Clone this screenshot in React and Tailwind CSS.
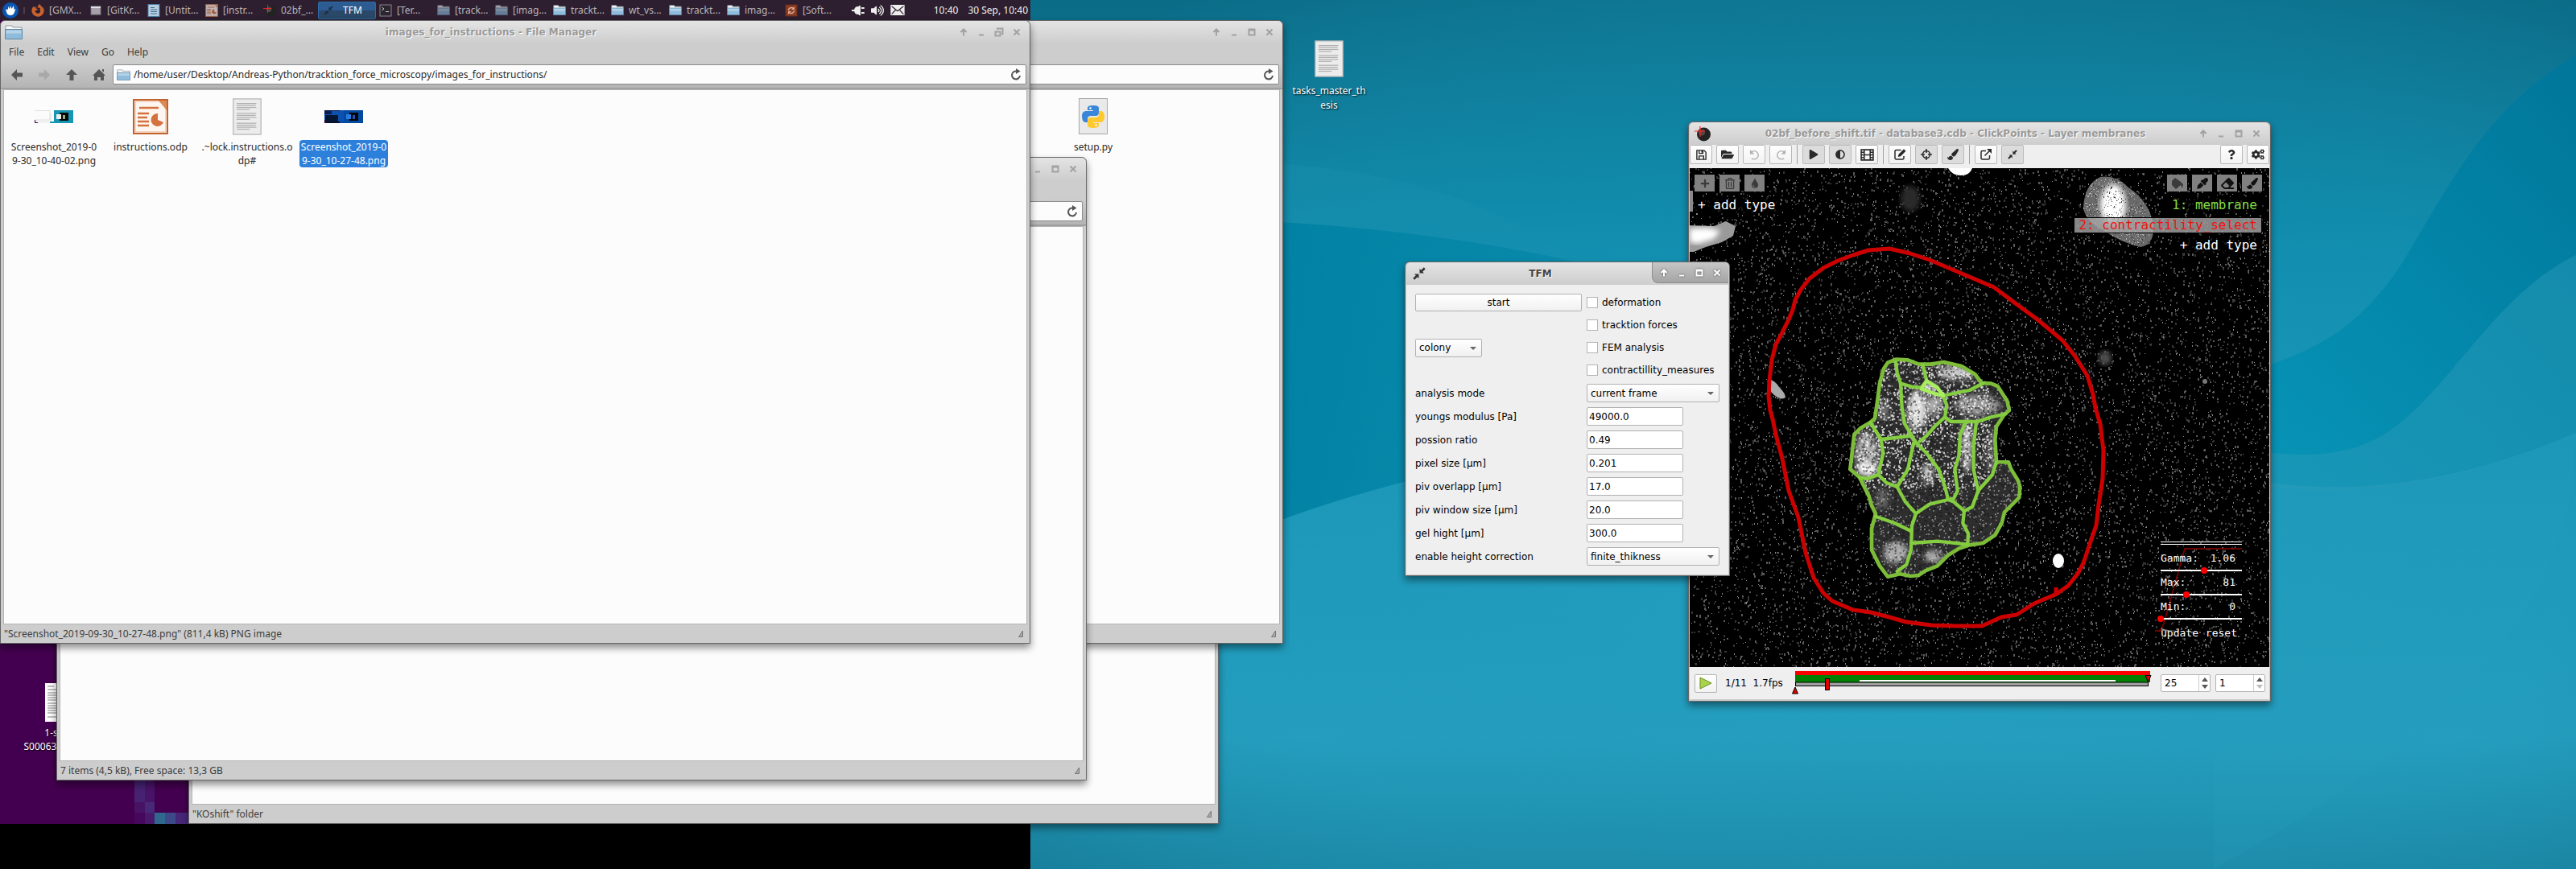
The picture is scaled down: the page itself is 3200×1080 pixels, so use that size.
import React from "react";
import {
  FaFolderOpen, FaPlay, FaAdjust, FaPaintBrush, FaQuestion, FaCogs, FaPlus, FaTint, FaEraser,
  FaEyeDropper, FaRegTrashAlt, FaFirefoxBrowser, FaVolumeUp, FaPlug,
} from "react-icons/fa";

/* ---------- small drawings ---------- */

function Folder({ className, dim }) {
  return (
    <svg viewBox="0 0 22 18" className={className} opacity={dim ? 0.6 : 1} aria-hidden="true">
      <path d="M1 1h8l1 2h11v5H1z" fill="#fafafa" stroke="#8f9aa3" strokeWidth="1" />
      <path d="M.5 5.500h21v12H.5z" fill="#8fbcdc" stroke="#5e88a5" />
      <path d="M1.500 6.500h19v4h-19z" fill="#b4d3e8" />
    </svg>
  );
}

function TextDoc({ className }) {
  const lines = [8, 11, 14, 17, 23, 26, 29, 32, 38, 41, 44, 47];
  return (
    <svg viewBox="0 0 44 56" className={className} aria-hidden="true">
      <rect x="1" y="1" width="42" height="54" fill="#ececec" stroke="#b5b5b5" strokeWidth="1.5" />
      {lines.map((y, i) => (
        <path key={y} d={`M6 ${y}H${i % 4 === 3 ? 26 : 36 - (i % 2)}`} stroke="#b0b0b0" strokeWidth="1.5" />
      ))}
    </svg>
  );
}

function OdpIcon({ className, dim }) {
  return (
    <svg viewBox="0 0 44 44" className={className} opacity={dim ? 0.7 : 1} aria-hidden="true">
      <rect x="1" y="1" width="42" height="42" fill="#fff" stroke="#c4622d" strokeWidth="2" />
      <rect x="3" y="3" width="38" height="38" fill="#fdf6f0" stroke="#e9b28e" />
      <path d="M32 2h10v12z" fill="#dd8a55" />
      <path d="M8 11h24M6 18h14M6 23h12M6 28h14M6 33h14" stroke="#d4713f" strokeWidth="2.500" />
      <path d="M31 26V18a8 8 0 1 0 7 11z" fill="#d4713f" />
    </svg>
  );
}

function PythonIcon({ className }) {
  return (
    <svg viewBox="0 0 36 46" className={className} aria-hidden="true">
      <rect x=".5" y=".5" width="35" height="44" fill="#e9e9e9" stroke="#a8a8a8" />
      <path d="M11 15v-3q0-3 7-3t7 3v6q0 4-4 4h-6q-4 0-4 4v4H8q-4-1-4-7.500T9 16h9v-1z" fill="#3a86d8" />
      <path d="M25 31v3q0 3-7 3t-7-3v-6q0-4 4-4h6q4 0 4-4v-4h3q4 1 4 7.500T27 30h-9v1z" fill="#fdc92f" />
      <circle cx="14.500" cy="12.500" r="1.300" fill="#fff" />
      <circle cx="21.500" cy="33.500" r="1.300" fill="#fff" />
    </svg>
  );
}

function Thumb({ selected }) {
  const a = selected ? "#0d51b0" : "#fbfbfb";
  return (
    <svg viewBox="0 0 48 16" className="h-4 w-12" aria-hidden="true">
      <rect width="48" height="16" fill={selected ? "#0349a0" : "#1796b4"} />
      <rect width="24" height="14" fill={a} />
      {!selected && <path d="M19 0v12M0 12h19M20 3v11M2 14h18" stroke="#c4c4c4" strokeWidth=".5" />}
      <rect y="14" width="19" height="2" fill={selected ? "#06112e" : "#f2f2f2"} />
      <rect width="19" height="1" fill={selected ? "#0b1a4a" : "#e2e2e6"} />
      <path d="M0 12h1v3h3v1H0z" fill="#3b0345" />
      {selected && <path d="M0 0h9v5h-9z" fill="#0a1c50" />}
      {selected && <rect x="1" y="6" width="16" height="9" fill="#061632" />}
      <rect x="31" y="3" width="11" height="10" fill="#050505" />
      <rect x="27" y="5" width="6" height="6" fill={selected ? "#2a7be0" : "#eee"} />
      <rect x="35" y="6" width="3" height="5" fill={selected ? "#1d56b8" : "#8fae80"} />
    </svg>
  );
}

function Compress({ className }) {
  return (
    <svg viewBox="0 0 16 16" className={className} fill="currentColor" aria-hidden="true">
      <path d="M8.500 7.500V2l1.800 1.800L13.800.3 15.700 2.200l-3.500 3.500L14 7.500zM7.500 8.500V14l-1.800-1.800-3.500 3.500L.3 13.800l3.500-3.500L2 8.500z" />
    </svg>
  );
}

function BallIcon({ className }) {
  return (
    <svg viewBox="0 0 20 20" className={className} aria-hidden="true">
      <circle cx="11.500" cy="11" r="8.500" fill="#222" />
      <circle cx="9" cy="8.500" r="4" fill="#4a4a4a" />
      <path d="M7 1v13M0 7h13" stroke="#f22" strokeWidth="1.200" />
    </svg>
  );
}

function Stroke({ className, d, fill }) {
  return (
    <svg viewBox="0 0 16 16" className={className} fill="none" stroke="currentColor" strokeWidth="1.500" aria-hidden="true">
      <path d={d} />
      {fill && <path d={fill} fill="currentColor" stroke="none" />}
    </svg>
  );
}
const SaveIcon = () => <Stroke className="size-[15px]" d="M2 2h9.500L14 4.500V14H2zM5 14V9.500h6V14M5 2v4h5V2" fill="M8 2h2v3H8z" />;
const UndoIcon = () => <Stroke className="size-[15px]" d="M3.500 4.500A5.500 5.500 0 1 1 4 12.500" fill="M2 1v6h6z" />;
const RedoIcon = () => <Stroke className="size-[15px]" d="M12.500 4.500A5.500 5.500 0 1 0 12 12.500" fill="M14 1v6H8z" />;
const FilmIcon = () => <Stroke className="size-[17px]" d="M1 2h14v12H1zM4.500 2v12M11.500 2v12M4.500 8h7M1 5h3.500M1 8h3.500M1 11h3.500M11.500 5H15M11.500 8H15M11.500 11H15" />;
const EditIcon = () => <Stroke className="size-[16px]" d="M9.500 2.500H3.500a1.500 1.500 0 0 0-1.500 1.500v8.500A1.500 1.500 0 0 0 3.500 14h8a1.500 1.500 0 0 0 1.500-1.500V10" fill="M13 1.200l2.500 2.500-6.500 6.500-3.200.8.700-3.300z" />;
const AimIcon = () => <Stroke className="size-[16px]" d="M8 1v5M8 10v5M1 8h5M10 8h5M8 3.500A4.500 4.500 0 1 1 8 12.500A4.500 4.500 0 1 1 8 3.500" />;
const LinkIcon = () => <Stroke className="size-[16px]" d="M8 3.500H3.500A1.500 1.500 0 0 0 2 5v7.500A1.500 1.500 0 0 0 3.500 14h7.500a1.500 1.500 0 0 0 1.500-1.500V9M6.500 9.500L13 3" fill="M9 1h6v6z" />;

function BucketIcon() {
  return (
    <svg viewBox="0 0 16 16" className="size-4" fill="currentColor" aria-hidden="true">
      <path d="M5 1l7 5 3 3-1 5-2-4-6 5-5-5V5z" />
    </svg>
  );
}

/* ---------- window chrome ---------- */

function WinButtons({ active, maximized }) {
  const color = active ? "text-white" : "text-[#a2a2a2]";
  const items = [
    ["Shade", "M6 10.500V5M2.500 6L6 2.500L9.500 6", "M6 1.500l4 4H2z"],
    ["Minimize", "M3 9.500h6", null],
    [
      maximized ? "Restore" : "Maximize",
      maximized ? "M1.500 5.500h6v5h-6zM4 3V1.500h6.500V8H9" : "M2.500 2.500h7v7h-7zM2 3.500h8",
      null,
    ],
    ["Close", "M2.500 2.500l7 7M9.500 2.500l-7 7", null],
  ];
  return (
    <div
      className={
        active
          ? "flex h-[26px] items-center gap-[10px] self-start rounded-bl-lg rounded-tr-md border-b border-l border-[#8e8e8e] bg-linear-to-b from-[#c6c6c6] to-[#a4a4a4] pr-2 pl-2"
          : "flex items-center gap-[10px] pr-[10px]"
      }
    >
      {items.map(([name, d, f]) => (
        <button key={name} aria-label={name} className={`block size-3 ${color}`}>
          <svg viewBox="0 0 12 12" className={active ? "size-3 drop-shadow-[0_0_1px_#444]" : "size-3"} fill="none" stroke="currentColor" strokeWidth="2">
            <path d={d} />
            {f && <path d={f} fill="currentColor" stroke="none" />}
          </svg>
        </button>
      ))}
    </div>
  );
}

function TitleBar({ icon, title, active, maximized }) {
  return (
    <header className="flex h-7 shrink-0 items-center rounded-t-md bg-linear-to-b from-[#e4e4e4] to-[#cdcdcd] pl-1">
      <span className="flex w-6 justify-center">{icon}</span>
      <h2
        className={`flex-1 truncate text-center font-['DejaVu_Sans',sans-serif] text-[12px] font-bold [text-shadow:1px_1px_0_#fff] ${active ? "text-[#444]" : "text-[#999]"}`}
      >
        {title}
      </h2>
      <WinButtons active={active} maximized={maximized} />
    </header>
  );
}

const winBase =
  "absolute flex flex-col rounded-t-md border border-[#666] bg-[#cdcdcd] shadow-[0_5px_10px_rgba(0,0,0,0.45)]";

function ArrowGlyph({ d, label, disabled }) {
  return (
    <button aria-label={label} disabled={disabled} className={`flex size-[34px] items-center justify-center ${disabled ? "text-[#a8a8a8]" : "text-[#555]"}`}>
      <svg viewBox="0 0 16 16" className="size-4" fill="currentColor" aria-hidden="true">
        <path d={d} />
      </svg>
    </button>
  );
}

function FileWindow({ place, title, path, status, maximized, children }) {
  return (
    <section className={`${winBase} ${place} h-[775px] w-[1280px] font-['Noto_Sans',sans-serif] text-[12px] text-[#3c3c3c]`}>
      <TitleBar icon={<Folder className="h-[18px] w-[22px]" />} title={title} maximized={maximized} />
      <nav className="flex h-[22px] shrink-0 items-center gap-4 pl-[10px]">
        {["File", "Edit", "View", "Go", "Help"].map((m) => (
          <button key={m}>{m}</button>
        ))}
      </nav>
      <div className="flex h-[35px] shrink-0 items-center border-b-2 border-[#a0a0a0] bg-linear-to-b from-[#cdcdcd] to-[#b4b4b4] pr-1 pl-[3px]">
        <ArrowGlyph label="Back" d="M1 8l7-7v4.500h7v5H8V15z" />
        <ArrowGlyph label="Forward" disabled d="M15 8L8 1v4.500H1v5h7V15z" />
        <ArrowGlyph label="Up" d="M8 1l7 7h-4.500v7h-5V8H1z" />
        <ArrowGlyph label="Home" d="M8 1l8 8h-2v6H10v-4H6v4H2V9H0zM12 1h2v4l-2-2z" />
        <label className="flex h-[25px] flex-1 items-center gap-1 rounded-xs border border-[#8a8a8a] bg-[#fcfcfc] px-1">
          <Folder className="h-[14px] w-[17px]" />
          <input aria-label="Location" defaultValue={path} className="min-w-0 flex-1 bg-transparent text-[#2a2a2a] outline-none" />
          <button aria-label="Reload" className="text-[#555]">
            <svg viewBox="0 0 16 16" className="size-4" fill="none" stroke="currentColor" strokeWidth="2" aria-hidden="true">
              <path d="M9 3.500A5 5 0 1 0 13 9" />
              <path d="M8 0l5.500 3.500L8 7z" fill="currentColor" stroke="none" />
            </svg>
          </button>
        </label>
      </div>
      <div className="mx-[3px] flex min-h-0 flex-1 border border-[#b4b4b4] bg-[#fcfcfc] pt-2 pl-0.5">{children}</div>
      <footer className="flex h-[23px] shrink-0 items-center justify-between pr-2 pl-1">
        <span>{status}</span>
        <svg viewBox="0 0 6 8" className="h-2 w-1.5" aria-hidden="true">
          <path d="M5.500 0v7.500H.5z" fill="#aaa" stroke="#777" />
        </svg>
      </footer>
    </section>
  );
}

function FileItem({ icon, lines, selected }) {
  return (
    <div className="flex w-[120px] flex-col items-center">
      <div className="flex h-[50px] items-center justify-center">{icon}</div>
      <p className={`mt-1 rounded-sm px-0.5 text-center leading-[17px] ${selected ? "bg-[#2c80dc] text-white" : "text-[#2a2a2a]"}`}>
        {lines.map((l) => (
          <span key={l} className="block">{l}</span>
        ))}
      </p>
    </div>
  );
}

/* ---------- task bar ---------- */

const tinyWindow = (
  <svg viewBox="0 0 16 14" className="h-3 w-4" aria-hidden="true"><rect x="1" y="1" width="14" height="12" fill="#a5a0aa" stroke="#77727c" /><path d="M1 2.500h14" stroke="#e4e4e8" strokeWidth="2" /></svg>
);
const tinyDoc = (
  <svg viewBox="0 0 16 16" className="size-4" aria-hidden="true"><rect x="1" y=".5" width="14" height="15" fill="#b9cedd" stroke="#4a7da3" /><path d="M4 4.500h5M4 7h8M4 9.500h8M4 12h8" stroke="#3f6d92" strokeWidth="1.200" /></svg>
);
const tinyTerm = (
  <svg viewBox="0 0 16 16" className="size-4" aria-hidden="true"><rect x="1" y="1" width="14" height="14" fill="#2b2630" stroke="#8a858f" /><path d="M3.500 4l2.500 2-2.500 2M8 9.500h4" stroke="#ccc" fill="none" /></svg>
);
const tinySoft = (
  <svg viewBox="0 0 16 16" className="size-4" aria-hidden="true"><rect x="1" y="1" width="14" height="14" fill="#8b3c24" stroke="#6b2c18" /><path d="M4.500 8a3.500 3.500 0 0 1 6-2.500M11.500 8a3.500 3.500 0 0 1-6 2.500" stroke="#d9a892" strokeWidth="1.500" fill="none" /><path d="M12 3v4H8zM4 13V9h4z" fill="#d9a892" /></svg>
);
const tasks = [
  [<FaFirefoxBrowser className="size-4 text-[#c9622c]" />, "[GMX..."],
  [tinyWindow, "[GitKr..."],
  [tinyDoc, "[Untit..."],
  [<OdpIcon className="size-4" dim />, "[instr..."],
  [<BallIcon className="size-4" />, "02bf_..."],
  [<Compress className="size-3 text-[#1d3049]" />, "TFM"],
  [tinyTerm, "[Ter..."],
  [<Folder className="h-[13px] w-4" dim />, "[track..."],
  [<Folder className="h-[13px] w-4" dim />, "[imag..."],
  [<Folder className="h-[13px] w-4" />, "trackt..."],
  [<Folder className="h-[13px] w-4" />, "wt_vs..."],
  [<Folder className="h-[13px] w-4" />, "trackt..."],
  [<Folder className="h-[13px] w-4" />, "imag..."],
  [tinySoft, "[Soft..."],
];

function TaskBar() {
  return (
    <nav className="flex h-[25px] items-center bg-[#2d1f2f] pl-[3px] font-['Noto_Sans',sans-serif] text-[12px] text-[#b9b4b9]">
      <button aria-label="Applications" className="mr-1.5">
        <svg viewBox="0 0 20 20" className="size-5" aria-hidden="true">
          <circle cx="10" cy="10" r="10" fill="#0b56b3" />
          <path d="M4 8q2 2 3 0l0-3 2 3 1-4 1.500 4L14 4l.5 5 2-1-1.500 4q-1 4-5 4t-5-4z" fill="#fff" />
        </svg>
      </button>
      <span className="mr-1 h-2 w-0.5 bg-[#4b3f4d]" />
      {tasks.map(([icon, label], i) => (
        <button
          key={i}
          className={`flex h-[22px] w-[72px] items-center overflow-hidden whitespace-nowrap ${label === "TFM" ? "gap-[10px] rounded-xs border border-[#2f6ba6] bg-linear-to-b from-[#2c5c91] from-50% to-[#2a4867] to-50% pl-1 text-white" : "gap-[6px] pl-1"}`}
        >
          <span className="flex w-4 shrink-0 justify-center">{icon}</span>
          {label}
        </button>
      ))}
      <div className="ml-auto flex items-center gap-2 pr-[3px] text-[#eee]">
        <FaPlug className="size-4 rotate-90" />
        <FaVolumeUp className="size-4" />
        <svg viewBox="0 0 20 15" className="h-[13px] w-[18px]" aria-hidden="true">
          <rect width="20" height="15" fill="#eee" />
          <path d="M1.500 2l8.500 7 8.500-7M1.500 13.500L7 7.500M18.500 13.500L13 7.500" stroke="#2d1f2f" strokeWidth="1.300" fill="none" />
        </svg>
        <span className="ml-7">10:40</span>
        <span className="ml-1">30 Sep, 10:40</span>
      </div>
    </nav>
  );
}

/* ---------- wallpaper ---------- */

function Wallpaper() {
  return (
    <svg viewBox="0 0 1568 1568" preserveAspectRatio="none" className="absolute inset-0 size-full" aria-hidden="true">
      <defs>
        <linearGradient id="wp" x1="0" y1="0" x2="0" y2="1">
          <stop offset="0" stopColor="#0c7794" />
          <stop offset=".3" stopColor="#108fb0" />
          <stop offset=".6" stopColor="#1d9abb" />
          <stop offset=".85" stopColor="#259fc0" />
          <stop offset="1" stopColor="#1d8caa" />
        </linearGradient>
        <radialGradient id="wc" cx=".55" cy=".6" r=".75">
          <stop offset="0" stopColor="#27a6c8" stopOpacity=".45" />
          <stop offset=".6" stopColor="#1e8eac" stopOpacity=".1" />
          <stop offset="1" stopColor="#0a5f78" stopOpacity=".45" />
        </radialGradient>
        <linearGradient id="wd" x1="0" y1="0" x2="1" y2="0">
          <stop offset="0" stopColor="#0080a2" />
          <stop offset="1" stopColor="#0089ab" stopOpacity=".1" />
        </linearGradient>
        <linearGradient id="wr" x1="0" y1="1" x2="1" y2="0">
          <stop offset="0" stopColor="#0095b8" stopOpacity=".7" />
          <stop offset="1" stopColor="#00769a" />
        </linearGradient>
      </defs>
      <rect width="1568" height="1568" fill="url(#wp)" />
      <rect width="1568" height="1568" fill="url(#wc)" />
      <path d="M200 290Q430 300 552 472T700 700H200z" fill="#1b8fae" opacity=".35" />
      <path d="M200 396Q400 410 560 475T900 700L700 760Q420 830 256 937L200 970z" fill="url(#wd)" />
      <path d="M1568 100C1480 190 1440 330 1400 450C1350 600 1300 640 1200 690V850C1300 900 1430 890 1568 780z" fill="url(#wr)" />
      <path d="M1200 800C1330 850 1370 800 1410 730C1460 640 1500 520 1568 460V780C1450 880 1320 910 1200 860z" fill="#2c9cb8" opacity=".45" />
      <path d="M1200 850C1320 915 1450 880 1568 780C1568 1050 1480 1300 1200 1568z" fill="#27a0be" opacity=".2" />
    </svg>
  );
}

/* ---------- TFM dialog ---------- */

function Combo({ label, id, options, className }) {
  return (
    <span className={`relative block ${className}`}>
      <select id={id} aria-label={label} className="block h-[23px] w-full appearance-none rounded-xs border border-[#b1b1b1] bg-linear-to-b from-white to-[#f0f0f0] pl-1 text-black">
        {options.map((o) => (
          <option key={o}>{o}</option>
        ))}
      </select>
      <svg viewBox="0 0 8 4" className="pointer-events-none absolute top-[10px] right-[7px] h-1 w-2" aria-hidden="true">
        <path d="M0 0h8L4 4z" fill="#666" />
      </svg>
    </span>
  );
}

function Check({ label }) {
  return (
    <label className="flex h-[22px] items-center gap-[5px] whitespace-nowrap">
      <input type="checkbox" className="size-[14px] appearance-none border border-[#b4b4b4] bg-white" />
      {label}
    </label>
  );
}

const fields = [
  ["youngs modulus [Pa]", "49000.0"],
  ["possion ratio", "0.49"],
  ["pixel size [µm]", "0.201"],
  ["piv overlapp [µm]", "17.0"],
  ["piv window size [µm]", "20.0"],
  ["gel hight [µm]", "300.0"],
];

function TfmWindow() {
  return (
    <section className={`${winBase} top-[325px] left-[1745px] w-[404px] px-px pb-px font-['DejaVu_Sans',sans-serif] text-[12px] text-black`}>
      <TitleBar active title="TFM" icon={<Compress className="size-4 text-[#333]" />} />
      <form className="grid grid-cols-[207px_1fr] items-center gap-x-1.5 gap-y-1.5 bg-[#efefef] p-[11px]">
        <button type="button" className="h-[22px] rounded-xs border border-[#b1b1b1] bg-linear-to-b from-white to-[#f0f0f0]">start</button>
        <Check label="deformation" />
        <span />
        <Check label="tracktion forces" />
        <div className="flex h-[22px] items-center">
          <Combo label="cell type" id="celltype" options={["colony", "cell layer"]} className="w-[83px]" />
        </div>
        <Check label="FEM analysis" />
        <span />
        <Check label="contractillity_measures" />
        <label htmlFor="mode">analysis mode</label>
        <Combo id="mode" options={["current frame", "all frames"]} className="w-full" />
        {fields.map(([label, value], i) => (
          <React.Fragment key={label}>
            <label htmlFor={`f${i}`}>{label}</label>
            <input id={`f${i}`} defaultValue={value} className="h-[23px] w-[120px] rounded-xs border border-[#b1b1b1] bg-white px-0.5" />
          </React.Fragment>
        ))}
        <label htmlFor="height">enable height correction</label>
        <Combo id="height" options={["finite_thikness", "infinite_thikness"]} className="w-full" />
      </form>
    </section>
  );
}

/* ---------- microscope image ---------- */

function specks(seed, count, w, h, size) {
  let s = seed;
  const rnd = () => {
    s = (s * 1664525 + 1013904223) % 4294967296;
    return s / 4294967296;
  };
  let d = "";
  for (let i = 0; i < count; i++) {
    const x = Math.round(rnd() * w);
    const y = Math.round(rnd() * h);
    const k = rnd() > 0.6 ? size + 1 : size;
    d += `M${x} ${y}h${size}v${k}h-${size}z`;
  }
  return d;
}

const colonyOutline =
  "M285 80L255 92L240 115L225 170L218 225L207 300L190 315L155 335L130 360L122 430L115 490L150 520L165 550L185 590L195 625L210 655L195 710L195 790L225 850L255 890L300 880L340 888L370 885L395 868L440 850L480 810L520 785L560 772L610 765L655 735L680 690L690 650L745 595L748 555L740 530L715 490L705 463L660 462L655 380L660 330L690 285L708 270L700 235L665 180L640 170L605 168L580 135L530 105L465 90L415 98L370 98L330 82Z";
const membranes = [
  "M285 90L290 130L303 170L308 260L318 320L345 365L360 390",
  "M303 170L350 183L380 185L400 160L385 100",
  "M400 160L440 185L460 215L475 250L468 295L430 330L400 365L375 385",
  "M380 190L430 208L462 215L560 195L612 168",
  "M468 295L490 312L590 312L640 295L695 283",
  "M230 378L345 365M190 315L230 378L238 430L220 510L180 525L150 520",
  "M220 510L250 540L290 555L330 490L352 390",
  "M290 555L320 610L360 655L345 700L342 790L325 845L290 870",
  "M360 655L410 620L480 603L470 560L445 490L400 430L360 390",
  "M545 315L525 360L520 440L505 490L515 570L500 600L480 603L500 610L540 645L535 690L555 730L553 770",
  "M585 315L575 400L575 490L592 570L570 630L540 645",
  "M660 462L645 510L592 570M210 665L280 690L342 720",
  "M342 765L440 758L553 770",
];
const glows = [
  [178, 430, 42, 80, 0.6], [510, 130, 70, 25, 0.75], [365, 270, 35, 75, 0.85], [430, 250, 30, 40, 0.6],
  [590, 250, 85, 40, 0.5], [550, 400, 20, 100, 0.65], [405, 505, 22, 35, 0.75], [240, 270, 20, 40, 0.35],
  [285, 800, 45, 40, 0.6], [425, 815, 35, 22, 0.6], [640, 420, 16, 80, 0.35], [235, 600, 25, 40, 0.25],
  [180, 490, 38, 22, 1], [415, 185, 22, 14, 1],
];

function CellImage() {
  return (
    <svg viewBox="0 0 720 620" preserveAspectRatio="xMidYMid slice" className="absolute inset-0 size-full bg-black" aria-hidden="true">
      <defs>
        <filter id="soft"><feGaussianBlur stdDeviation="3" /></filter>
        <filter id="softer" x="-50%" y="-50%" width="200%" height="200%"><feGaussianBlur stdDeviation="11" /></filter>
        <clipPath id="colony"><path d={colonyOutline} /></clipPath>
        <clipPath id="blob"><path d="M489 50Q490 20 510 11Q530 8 545 24Q570 40 576 70Q578 95 560 98Q535 92 515 78Q492 66 489 50" /></clipPath>
      </defs>
      <path d={specks(7, 3600, 720, 620, 1)} fill="#8a8a8a" />
      <path d={specks(91, 3200, 720, 620, 2)} fill="#5a5a5a" />
      <path d={specks(33, 4200, 720, 620, 2)} fill="#363636" />
      <g clipPath="url(#blob)">
        <rect x="480" width="110" height="110" fill="#6a6a6a" />
        <ellipse cx="526" cy="46" rx="16" ry="26" fill="#fff" filter="url(#soft)" />
        <path transform="translate(480 0)" d={specks(5, 900, 110, 110, 1)} fill="#b5b5b5" />
        <path transform="translate(480 0)" d={specks(6, 500, 110, 110, 1)} fill="#3f3f3f" />
      </g>
      <path d="M0 71L30 72L45 66L57 72L54 84L40 92L20 98L5 104H0z" fill="#9a9a9a" />
      <path d="M0 75L22 74L38 78L30 88L10 94L0 92z" fill="#fff" filter="url(#soft)" />
      <path d="M0 28h4v26H0z" fill="#888" />
      <path d="M321 0h30q-3 9-14 9T321 0z" fill="#fff" />
      <ellipse cx="274" cy="38" rx="12" ry="16" fill="#2c2c2c" filter="url(#soft)" />
      <path d="M99 262q8 3 12 10q8 8 8 13q-5 4-14-3q-8-6-6-20z" fill="#aaa" />
      <ellipse cx="516" cy="236" rx="8" ry="9" fill="#4e4e4e" filter="url(#soft)" />
      <circle cx="640" cy="265" r="3" fill="#777" />
      <ellipse cx="458" cy="488" rx="7" ry="9" fill="#fff" />
      <svg x="161" y="211" width="300" height="320" viewBox="0 0 900 960">
        <g clipPath="url(#colony)">
          <rect width="900" height="960" fill="#2e2e2e" />
          {glows.map(([cx, cy, rx, ry, o]) => (
            <ellipse key={`${cx}-${cy}`} cx={cx} cy={cy} rx={rx} ry={ry} fill="#fff" opacity={o} filter="url(#softer)" />
          ))}
          <path d={specks(11, 5200, 900, 960, 6)} fill="#161616" opacity=".55" />
          <path d={specks(12, 3600, 900, 960, 5)} fill="#d8d8d8" opacity=".55" />
          <path d={specks(13, 1600, 640, 560, 6)} fill="#fff" opacity=".75" />
        </g>
        <g fill="none" stroke="#84cc40" strokeWidth="13" strokeLinejoin="round" strokeLinecap="round">
          <path d={colonyOutline} strokeWidth="14" stroke="#7cbc38" />
          {membranes.map((d) => (
            <path key={d} d={d} />
          ))}
          <path d="M400 160L380 190L430 208L462 215L440 185z" stroke="#a8ec60" />
        </g>
      </svg>
      <path
        d="M248 100L222 102L203 108L184 115L166 124L149 137L138 151L131 164L128 176L123 188L113 208L107 219L102 238L99 264L98 284L100 301L103 312L107 331L115 361L123 401L135 434L144 478L154 509L166 528L177 538L203 549L225 552L248 558L269 564L300 568L331 569L363 569L387 558L406 555L428 541L456 529L470 519L482 504L489 491L498 464L505 444L508 418L513 386L514 351L510 318L504 298L501 281L494 258L479 234L463 214L432 188L406 169L378 148L331 128L298 114L274 106ZM455 521V530"
        fill="none" stroke="#cc0000" strokeWidth="5" strokeLinejoin="round"
      />
    </svg>
  );
}

/* ---------- ClickPoints window ---------- */

function Tool({ label, pressed, disabled, children }) {
  return (
    <button
      aria-label={label}
      disabled={disabled}
      className={`flex h-6 w-7 items-center justify-center rounded-xs border ${pressed ? "border-[#bbb] bg-[#dcdcdc]" : "border-[#b8b8b8] bg-linear-to-b from-white to-[#f2f2f2]"} ${disabled ? "text-[#b0b0b0]" : "text-[#2a2a2a]"}`}
    >
      {children}
    </button>
  );
}
const Sep = () => <span className="mx-px h-6 w-px bg-[#a0a0a0]" />;

function Chip({ label, dim, children }) {
  return (
    <button aria-label={label} className={`flex h-[21px] w-[25px] items-center justify-center bg-[#808080] ${dim ? "text-[#3a3a3a]" : "text-[#111]"}`}>
      {children}
    </button>
  );
}

function Level({ label, value, pos }) {
  return (
    <label className="block h-[30px]">
      <span className="flex h-[22px] items-center justify-between pr-2">
        <span>{label}</span>
        <span>{value}</span>
      </span>
      <span className="relative block h-2">
        <span className="absolute inset-x-0 top-[3px] h-0.5 bg-white" />
        <input
          type="range" min="0" max="100" defaultValue={pos}
          className="relative -left-1 block h-2 w-[109px] appearance-none bg-transparent [&::-webkit-slider-thumb]:h-2 [&::-webkit-slider-thumb]:w-2 [&::-webkit-slider-thumb]:appearance-none [&::-webkit-slider-thumb]:rounded-full [&::-webkit-slider-thumb]:bg-[#f00]"
        />
      </span>
    </label>
  );
}

function Spin({ label, value }) {
  return (
    <div className="flex h-[22px] w-[62px] rounded-xs border border-[#b4b4b4] bg-white">
      <input aria-label={label} defaultValue={value} className="w-[46px] min-w-0 bg-transparent pl-1" />
      <div className="flex flex-1 flex-col items-center justify-center gap-1 border-l border-[#ccc]">
        <button aria-label={`Increase ${label}`}><svg viewBox="0 0 8 5" className="block h-[5px] w-2"><path d="M0 5h8L4 0z" fill="#555" /></svg></button>
        <button aria-label={`Decrease ${label}`}><svg viewBox="0 0 8 5" className="block h-[5px] w-2"><path d="M0 0h8L4 5z" fill={value === "1" ? "#bbb" : "#555"} /></svg></button>
      </div>
    </div>
  );
}

function ClickPoints() {
  return (
    <section className={`${winBase} top-[151px] left-[2097px] w-[724px] px-px pb-0.5 font-['DejaVu_Sans',sans-serif] text-[12px] text-black`}>
      <TitleBar title="02bf_before_shift.tif - database3.cdb - ClickPoints - Layer membranes" icon={<BallIcon className="size-5" />} />
      <div className="flex h-[29px] items-start gap-[5px] bg-[#efefef]">
        <Tool label="Save"><SaveIcon /></Tool>
        <Tool label="Open"><FaFolderOpen className="size-4" /></Tool>
        <Tool label="Undo" disabled><UndoIcon /></Tool>
        <Tool label="Redo" disabled><RedoIcon /></Tool>
        <Sep />
        <Tool label="Play" pressed><FaPlay className="size-3" /></Tool>
        <Tool label="Contrast" pressed><FaAdjust className="size-3" /></Tool>
        <Tool label="Video"><FilmIcon /></Tool>
        <Sep />
        <Tool label="Annotate"><EditIcon /></Tool>
        <Tool label="Marker" pressed><AimIcon /></Tool>
        <Tool label="Mask" pressed><FaPaintBrush className="size-3.5" /></Tool>
        <Sep />
        <Tool label="Export"><LinkIcon /></Tool>
        <Tool label="TFM" pressed><Compress className="size-3" /></Tool>
        <span className="flex-1" />
        <Tool label="Help"><FaQuestion className="size-3" /></Tool>
        <Tool label="Options"><FaCogs className="size-4" /></Tool>
      </div>
      <div className="relative flex h-[620px] justify-between overflow-hidden bg-black pt-2 pr-[9px] pl-1.5 font-['DejaVu_Sans_Mono',monospace] text-[16px] text-white">
        <CellImage />
        <div className="relative">
          <div className="flex gap-1.5">
            <Chip label="Add marker" dim><FaPlus className="size-3" /></Chip>
            <Chip label="Delete marker" dim><FaRegTrashAlt className="size-3.5" /></Chip>
            <Chip label="Colour" dim><FaTint className="size-3" /></Chip>
          </div>
          <button className="mt-[7px] block h-5 bg-black/70 px-1 leading-5">+ add type</button>
        </div>
        <div className="relative flex flex-col items-end">
          <div className="flex gap-1.5">
            <Chip label="Fill" dim><BucketIcon /></Chip>
            <Chip label="Pick"><FaEyeDropper className="size-3.5" /></Chip>
            <Chip label="Erase"><FaEraser className="size-4" /></Chip>
            <Chip label="Paint"><FaPaintBrush className="size-3.5" /></Chip>
          </div>
          <button className="mt-[7px] h-5 bg-black/60 px-1.5 leading-5 text-[#84dc44]">1: membrane</button>
          <button className="mt-[5px] h-5 border border-black bg-[#a8a8a8]/80 px-[5px] leading-[18px] text-[#f01010]">2: contractility_select</button>
          <button className="mt-[5px] h-5 bg-black/60 px-1.5 leading-5">+ add type</button>
        </div>
        <div className="absolute right-[34px] bottom-8 w-[101px] text-[13px]">
          <svg viewBox="0 0 108 104" className="absolute top-2 -left-[7px] h-[104px] w-[108px]" aria-hidden="true">
            <path d="M0 103h6l5-9L37 1h71" stroke="#8b0000" strokeWidth="1.500" fill="none" />
            <path d="M8 103v-4q4 4 25 4z" fill="#888" />
          </svg>
          <div className="relative mb-1.5 h-1 border-y border-white" />
          <div className="relative">
            <Level label="Gamma:" value="1.06" pos={53} />
            <Level label="Max:" value="81" pos={32} />
            <Level label="Min:" value="0" pos={0} />
          </div>
          <div className="relative mt-1 flex justify-between pr-[6px] leading-[20px]">
            <button>update</button>
            <button>reset</button>
          </div>
        </div>
      </div>
      <div className="flex h-10 items-center bg-[#efefef] pl-1.5 pr-[5px]">
        <button aria-label="Play" className="flex h-[23px] w-7 items-center justify-center rounded-xs border border-[#b4b4b4] bg-linear-to-b from-white to-[#f2f2f2]">
          <svg viewBox="0 0 16 16" className="size-4"><path d="M1 1l14 7-14 7z" fill="#aad34c" stroke="#6a8f1e" /></svg>
        </button>
        <span className="ml-2.5 whitespace-pre">1/11  1.7fps</span>
        <svg viewBox="0 0 450 30" className="ml-auto h-[30px] w-[450px]" aria-hidden="true">
          <rect x="4" y="0" width="441" height="5" fill="#f00" />
          <rect x="4" y="5" width="441" height="9" fill="#008000" />
          <rect x="84" y="11" width="318" height="2" fill="#fff" />
          <rect x="4.500" y="14" width="438" height="4.500" fill="#a0a0a0" stroke="#000" />
          <rect x="41.500" y="9.500" width="5" height="14" fill="#d00" stroke="#000" />
          <path d="M4 20l3.500 8h-7zM439 5.500h7l-3.500 8z" fill="#d00" stroke="#000" />
        </svg>
        <div className="ml-2 flex gap-1.5">
          <Spin label="rate" value="25" />
          <Spin label="step" value="1" />
        </div>
      </div>
    </section>
  );
}

/* ---------- desktop ---------- */

const pixels = [
  [167, 0, 13, 28, "#472273"], [180, 0, 12, 28, "#481468"], [167, 28, 13, 13, "#471365"], [180, 28, 12, 13, "#482878"],
  [167, 41, 13, 14, "#46085c"], [180, 41, 12, 14, "#481a6c"], [192, 41, 13, 14, "#30678d"], [205, 41, 13, 14, "#3e4989"], [218, 41, 16, 14, "#472777"],
];

export default function App() {
  return (
    <main className="relative flex min-h-screen w-full overflow-hidden bg-black text-[12px]">
      <div className="flex w-2/5 flex-col">
        <TaskBar />
        <div className="relative h-[999px] bg-[#440050]">
          <svg viewBox="0 0 240 55" className="absolute bottom-0 left-0 h-[55px] w-[240px]" aria-hidden="true">
            {pixels.map(([x, y, w, h, c]) => (
              <rect key={`${x}-${y}`} x={x} y={y} width={w} height={h} fill={c} />
            ))}
          </svg>
          <div className="absolute top-[762px] left-6 flex w-[100px] flex-col items-center font-['Noto_Sans',sans-serif] leading-[17px] text-white [text-shadow:1px_1px_2px_#000]">
            <span className="mb-[45px]">results</span>
            <svg viewBox="0 0 36 48" className="h-12 w-9" aria-hidden="true">
              <rect width="36" height="48" fill="#fff" />
              <path d="M3 4h8M3 8h30M3 12h30M3 15h30M3 18h30M3 21h30M3 25h30M3 28h30M3 31h30M3 34h30M3 37h30M3 42h14" stroke="#aaa" strokeWidth="1.500" />
            </svg>
            <span className="mt-[5px]">1-s2.0-</span>
            <span>S000634951400</span>
          </div>
        </div>
      </div>
      <div className="relative flex-1">
        <Wallpaper />
        <div className="absolute top-[50px] left-[321px] flex w-[100px] flex-col items-center font-['Noto_Sans',sans-serif] leading-[18px] text-white [text-shadow:1px_1px_2px_#000]">
          <TextDoc className="h-[46px] w-9" />
          <span className="mt-2">tasks_master_th</span>
          <span>esis</span>
        </div>
      </div>

      <FileWindow place="top-[249px] left-[234px]" title="KOshift - File Manager" path="/home/user/" status={'"KOshift" folder'} />
      <FileWindow place="top-[25px] left-[314px]" title="tracktion_force_microscopy - File Manager" path="/home/user/" status="">
        <div className="ml-auto pr-[171px]">
          <FileItem icon={<PythonIcon className="h-[46px] w-9" />} lines={["setup.py"]} />
        </div>
      </FileWindow>
      <FileWindow place="top-[195px] left-[70px]" title="File Manager" path="/home/user/" status="7 items (4,5 kB), Free space: 13,3 GB" />
      <FileWindow
        place="top-[25px] left-0"
        maximized
        title="images_for_instructions - File Manager"
        path="/home/user/Desktop/Andreas-Python/tracktion_force_microscopy/images_for_instructions/"
        status={'"Screenshot_2019-09-30_10-27-48.png" (811,4 kB) PNG image'}
      >
        <FileItem icon={<Thumb />} lines={["Screenshot_2019-0", "9-30_10-40-02.png"]} />
        <FileItem icon={<OdpIcon className="size-11" />} lines={["instructions.odp"]} />
        <FileItem icon={<TextDoc className="h-[46px] w-9" />} lines={[".~lock.instructions.o", "dp#"]} />
        <FileItem icon={<Thumb selected />} lines={["Screenshot_2019-0", "9-30_10-27-48.png"]} selected />
      </FileWindow>

      <ClickPoints />
      <TfmWindow />
    </main>
  );
}
